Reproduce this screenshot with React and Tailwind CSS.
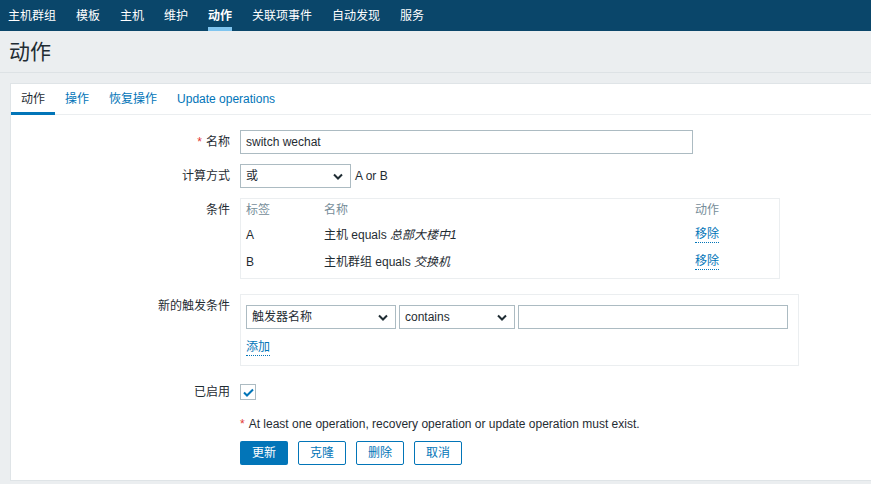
import React from "react";

const FONT = { fontFamily: '"Liberation Sans", Arial, "Noto Sans CJK SC", sans-serif' };

function Chevron() {
  return (
    <svg width="10" height="7" viewBox="0 0 10 7" className="shrink-0">
      <path d="M1 1.5 L5 5.5 L9 1.5" fill="none" stroke="#1f2c33" strokeWidth="2" />
    </svg>
  );
}

function Select({ value, width }) {
  return (
    <div
      className="h-[24px] border border-[#acbbc2] bg-white flex items-center justify-between pl-[5px] pr-[7px] text-[12px] text-[#1f2c33]"
      style={{ width }}
    >
      <span>{value}</span>
      <Chevron />
    </div>
  );
}

function Row({ label, required, children, className = "" }) {
  return (
    <div className={"flex " + className}>
      <div className="w-[219px] shrink-0 h-[24px] leading-[24px] text-right text-[12px] text-[#1f2c33]">
        {required && <span className="text-[#e33734] mr-[4px]">*</span>}
        {label}
      </div>
      <div className="ml-[10px] flex-1 min-w-0">{children}</div>
    </div>
  );
}

function DottedLink({ children }) {
  return (
    <span className="text-[#0275b8] border-b border-dotted border-[#0275b8] leading-[15px] inline-block">
      {children}
    </span>
  );
}

export default function App() {
  const nav = ["主机群组", "模板", "主机", "维护", "动作", "关联项事件", "自动发现", "服务"];
  const tabs = ["动作", "操作", "恢复操作", "Update operations"];
  return (
    <div className="w-[871px] h-[484px] overflow-hidden bg-[#ebeef0]" style={FONT}>
      {/* top nav */}
      <div className="h-[31px] bg-[#0a466a] flex pl-[8px] gap-[20px]">
        {nav.map((n) => (
          <div key={n} className="relative h-full flex items-center text-[12px] text-white">
            <span className={n === "动作" ? "font-bold" : ""}>{n}</span>
            {n === "动作" && (
              <div className="absolute left-0 right-0 bottom-0 h-[4px] bg-[#80c5ef]" />
            )}
          </div>
        ))}
      </div>

      {/* title */}
      <div className="h-[42px] flex items-center pl-[9px] text-[21px] text-[#1f2c33] border-b border-[#dde2e5]">
        动作
      </div>

      {/* panel */}
      <div className="mt-[10px] ml-[10px] bg-white border-t border-l border-b border-[#dfe4e7] h-[398px]">
        {/* tabs */}
        <div className="h-[31px] flex border-b border-[#ebeef0] text-[12px]">
          {tabs.map((t, i) => (
            <div
              key={t}
              className={
                "relative h-full flex items-center px-[10px] " +
                (i === 0 ? "text-[#1f2c33]" : "text-[#0275b8]")
              }
            >
              {t}
              {i === 0 && (
                <div className="absolute left-0 right-0 bottom-[-1px] h-[3px] bg-[#0275b8]" />
              )}
            </div>
          ))}
        </div>

        {/* form */}
        <div className="flex flex-col">
          <Row label="名称" required className="mt-[15px]">
            <div className="w-[453px] h-[24px] border border-[#acbbc2] flex items-center px-[5px] text-[12px] text-[#1f2c33]">
              switch wechat
            </div>
          </Row>

          <Row label="计算方式" className="mt-[10px]">
            <div className="flex items-center gap-[4px] text-[12px] text-[#1f2c33]">
              <Select value="或" width={111} />
              <span>A or B</span>
            </div>
          </Row>

          <Row label="条件" className="mt-[10px]">
            <div className="w-[540px] border border-[#ebeef0] pl-[5px] pb-[3px] text-[12px] text-[#1f2c33]">
              <div className="flex h-[22px] items-center text-[#768d99]">
                <div className="w-[78px]">标签</div>
                <div className="w-[371px]">名称</div>
                <div>动作</div>
              </div>
              <div className="flex h-[27px] items-center">
                <div className="w-[78px]">A</div>
                <div className="w-[371px]">
                  主机 equals <i>总部大楼中1</i>
                </div>
                <DottedLink>移除</DottedLink>
              </div>
              <div className="flex h-[27px] items-center">
                <div className="w-[78px]">B</div>
                <div className="w-[371px]">
                  主机群组 equals <i>交换机</i>
                </div>
                <DottedLink>移除</DottedLink>
              </div>
            </div>
          </Row>

          <Row label="新的触发条件" className="mt-[15px]">
            <div className="w-[559px] h-[72px] border border-[#ebeef0] pl-[5px] pt-[10px] text-[12px] text-[#1f2c33]">
              <div className="flex gap-[3px]">
                <Select value="触发器名称" width={150} />
                <Select value="contains" width={116} />
                <div className="w-[270px] h-[24px] border border-[#acbbc2]" />
              </div>
              <div className="mt-[10px] h-[18px] flex items-center">
                <DottedLink>添加</DottedLink>
              </div>
            </div>
          </Row>

          <Row label="已启用" className="mt-[14px]">
            <div className="h-[24px] flex items-center">
              <div className="w-[16px] h-[16px] border border-[#acbbc2] flex items-center justify-center">
                <svg width="11" height="9" viewBox="0 0 11 9">
                  <path d="M1 4.5 L4 7.5 L10 1.5" fill="none" stroke="#0275b8" strokeWidth="2" />
                </svg>
              </div>
            </div>
          </Row>

          <Row label="" className="mt-[8px]">
            <div className="h-[24px] flex items-center text-[12px] text-[#1f2c33]">
              <span className="text-[#e33734] mr-[4px]">*</span>
              At least one operation, recovery operation or update operation must exist.
            </div>
          </Row>

          <Row label="" className="mt-[5px]">
            <div className="flex gap-[10px] text-[12px]">
              <div className="w-[48px] h-[24px] rounded-[2px] bg-[#0275b8] text-white flex items-center justify-center">
                更新
              </div>
              {["克隆", "删除", "取消"].map((b) => (
                <div
                  key={b}
                  className="w-[48px] h-[24px] rounded-[2px] border border-[#0275b8] text-[#0275b8] bg-white flex items-center justify-center"
                >
                  {b}
                </div>
              ))}
            </div>
          </Row>
        </div>
      </div>
    </div>
  );
}
